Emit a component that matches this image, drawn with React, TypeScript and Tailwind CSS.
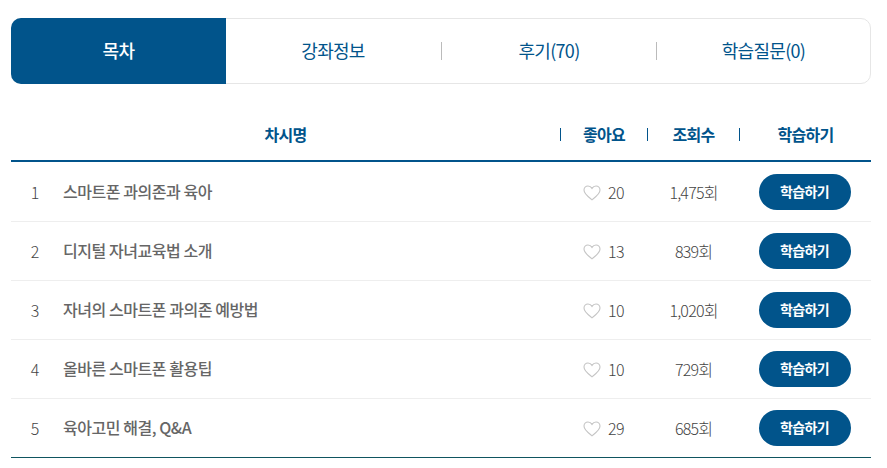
const font = { fontFamily: '"Noto Sans CJK KR", "Noto Sans", sans-serif' }

type Lesson = {
  no: number
  title: string
  likes: number
  views: string
}

const lessons: Lesson[] = [
  { no: 1, title: '스마트폰 과의존과 육아', likes: 20, views: '1,475회' },
  { no: 2, title: '디지털 자녀교육법 소개', likes: 13, views: '839회' },
  { no: 3, title: '자녀의 스마트폰 과의존 예방법', likes: 10, views: '1,020회' },
  { no: 4, title: '올바른 스마트폰 활용팁', likes: 10, views: '729회' },
  { no: 5, title: '육아고민 해결, Q&A', likes: 29, views: '685회' },
]

function Heart() {
  return (
    <svg className="mt-[1px]" width="18" height="16" viewBox="0 0 18 16" fill="none" stroke="#c4c4c4" strokeWidth="1.1">
      <path d="M9 14.800C6.600 12.800 1 9.200 1 5.100 1 2.800 2.800 1 5 1c1.700 0 3.100.9 4 2.400C9.900 1.900 11.300 1 13 1c2.200 0 4 1.800 4 4.100 0 4.100-5.600 7.700-8 9.700z" />
    </svg>
  )
}

export default function App() {
  return (
    <div className="w-[887px] h-[468px] bg-white px-[11px] pt-[18px] overflow-hidden" style={font}>
      {/* Tabs */}
      <div className="flex h-[66px] w-[860px] rounded-[10px] border border-[#e6e6e6] bg-white">
        <div className="-m-px flex h-[66px] w-[215px] items-center justify-center rounded-l-[10px] bg-[#01548b] pb-[2px] text-[18px] font-medium tracking-[-0.5px] text-white">
          목차
        </div>
        <div className="flex w-[216px] items-center justify-center pb-[2px] text-[18px] font-normal tracking-[-0.7px] text-[#01548b]">
          강좌정보
        </div>
        <div className="my-auto h-[18px] w-px bg-[#bbbbbb]" />
        <div className="flex w-[214px] items-center justify-center pb-[2px] text-[18px] font-normal tracking-[-0.7px] text-[#01548b]">
          후기(70)
        </div>
        <div className="my-auto h-[18px] w-px bg-[#bbbbbb]" />
        <div className="flex flex-1 items-center justify-center pb-[2px] text-[18px] font-normal tracking-[-0.7px] text-[#01548b]">
          학습질문(0)
        </div>
      </div>

      {/* Table */}
      <div className="mt-[24px] w-[860px]">
        <div className="flex h-[54px] items-center border-b-2 border-[#01548b] text-[16px] font-bold tracking-[-0.7px] text-[#01548b]">
          <div className="w-[549px] text-center">차시명</div>
          <div className="h-[13px] w-px bg-[#01548b]" />
          <div className="w-[86px] text-center">좋아요</div>
          <div className="h-[13px] w-px bg-[#01548b]" />
          <div className="w-[91px] text-center">조회수</div>
          <div className="h-[13px] w-px bg-[#01548b]" />
          <div className="flex-1 text-center">학습하기</div>
        </div>

        <div className="pt-px">
          {lessons.map((lesson, index) => (
            <div
              key={lesson.no}
              className={`flex h-[59px] items-center ${index === lessons.length - 1 ? 'border-b border-[#0f5560]' : 'border-b border-[#eeeeee]'}`}
            >
              <div className="w-[48px] text-center text-[16px] font-light text-[#444444]">{lesson.no}</div>
              <div className="w-[499px] pb-[2px] pl-[4px] text-[16px] font-medium tracking-[-0.45px] text-[#666666]">{lesson.title}</div>
              <div className="flex w-[90px] items-center gap-[7px] pl-[25px] text-[16px] font-light tracking-[-0.5px] text-[#444444]">
                <Heart />
                {lesson.likes}
              </div>
              <div className="w-[90px] pl-[1px] text-center text-[16px] font-light tracking-[-0.8px] text-[#444444]">{lesson.views}</div>
              <div className="flex flex-1 justify-center">
                <div className="flex h-[36px] w-[92px] items-center justify-center rounded-full bg-[#01548b] pb-[2px] text-[14px] font-bold tracking-[-0.6px] text-white">
                  학습하기
                </div>
              </div>
            </div>
          ))}
        </div>
      </div>
    </div>
  )
}
